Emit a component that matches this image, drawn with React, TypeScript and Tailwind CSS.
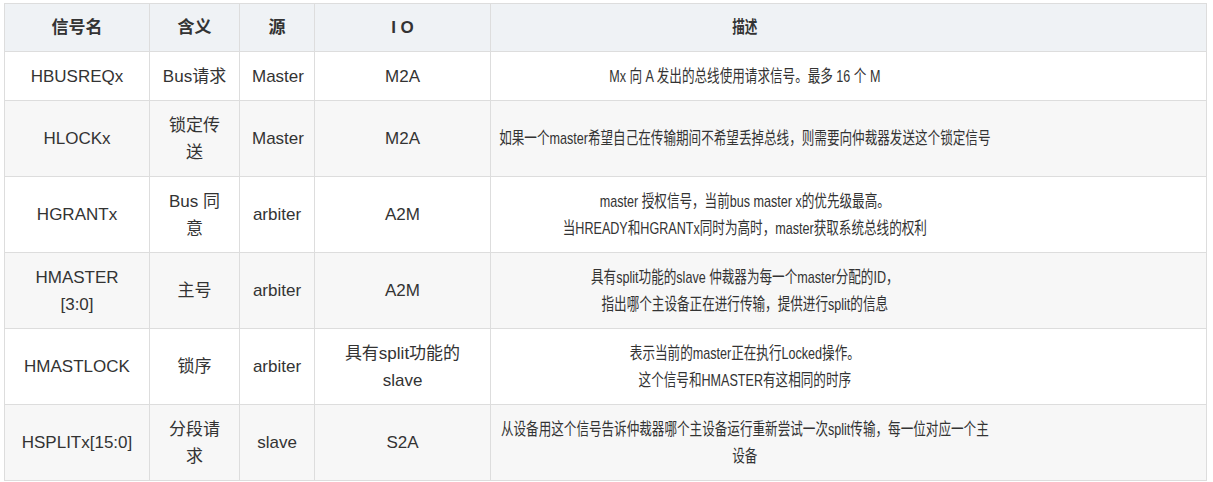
import React from 'react'

type Row = {
  name: React.ReactNode
  meaning: string
  source: string
  io: string
  desc: string[]
}

const rows: Row[] = [
  { name: 'HBUSREQx', meaning: 'Bus请求', source: 'Master', io: 'M2A', desc: ['Mx 向 A 发出的总线使用请求信号。最多 16 个 M'] },
  { name: 'HLOCKx', meaning: '锁定传送', source: 'Master', io: 'M2A', desc: ['如果一个master希望自己在传输期间不希望丢掉总线，则需要向仲裁器发送这个锁定信号'] },
  {
    name: 'HGRANTx',
    meaning: 'Bus 同意',
    source: 'arbiter',
    io: 'A2M',
    desc: ['master 授权信号，当前bus master x的优先级最高。', '当HREADY和HGRANTx同时为高时，master获取系统总线的权利'],
  },
  {
    name: (
      <>
        HMASTER
        <br />
        [3:0]
      </>
    ),
    meaning: '主号',
    source: 'arbiter',
    io: 'A2M',
    desc: ['具有split功能的slave 仲裁器为每一个master分配的ID，', '指出哪个主设备正在进行传输，提供进行split的信息'],
  },
  {
    name: 'HMASTLOCK',
    meaning: '锁序',
    source: 'arbiter',
    io: '具有split功能的slave',
    desc: ['表示当前的master正在执行Locked操作。', '这个信号和HMASTER有这相同的时序'],
  },
  {
    name: 'HSPLITx[15:0]',
    meaning: '分段请求',
    source: 'slave',
    io: 'S2A',
    desc: ['从设备用这个信号告诉仲裁器哪个主设备运行重新尝试一次split传输，每一位对应一个主', '设备'],
  },
]

const cell = 'border border-[#dddddd] text-center align-middle'
const body = `${cell} py-[10.5px]`
const head = `${cell} py-[10px]`

// description text is squeezed sideways in the source, centred in the left part of the cell
function Squeezed({ lines }: { lines: string[] }) {
  return (
    <div className="w-[686px] origin-left scale-x-[0.74] text-center">
      {lines.map((l, i) => (
        <div key={i} className="whitespace-nowrap">
          {l}
        </div>
      ))}
    </div>
  )
}

export default function App() {
  return (
    <div className="bg-white pl-[4px] pt-[3px] font-['Liberation_Sans','Noto_Sans_CJK_SC',sans-serif] text-[17px] leading-[27px] text-[#333333]">
      <table className="w-[1203px] table-fixed border-collapse">
        <colgroup>
          <col className="w-[145px]" />
          <col className="w-[90px]" />
          <col className="w-[75px]" />
          <col className="w-[176px]" />
          <col />
        </colgroup>
        <thead>
          <tr className="bg-[#eff2f5] font-bold">
            <th className={`${head} px-3`}>信号名</th>
            <th className={`${head} px-3`}>含义</th>
            <th className={`${head} px-3`}>源</th>
            <th className={`${head} px-3`}>I O</th>
            <th className={head}>
              <Squeezed lines={['描述']} />
            </th>
          </tr>
        </thead>
        <tbody>
          {rows.map((r, i) => (
            <tr key={i} className={i % 2 === 0 ? 'bg-white' : 'bg-[#f7f7f7]'}>
              <td className={`${body} px-3`}>{r.name}</td>
              <td className={`${body} px-3`}>{r.meaning}</td>
              <td className={`${body} px-3`}>{r.source}</td>
              <td className={`${body} px-3`}>{r.io}</td>
              <td className={body}>
                <Squeezed lines={r.desc} />
              </td>
            </tr>
          ))}
        </tbody>
      </table>
    </div>
  )
}
